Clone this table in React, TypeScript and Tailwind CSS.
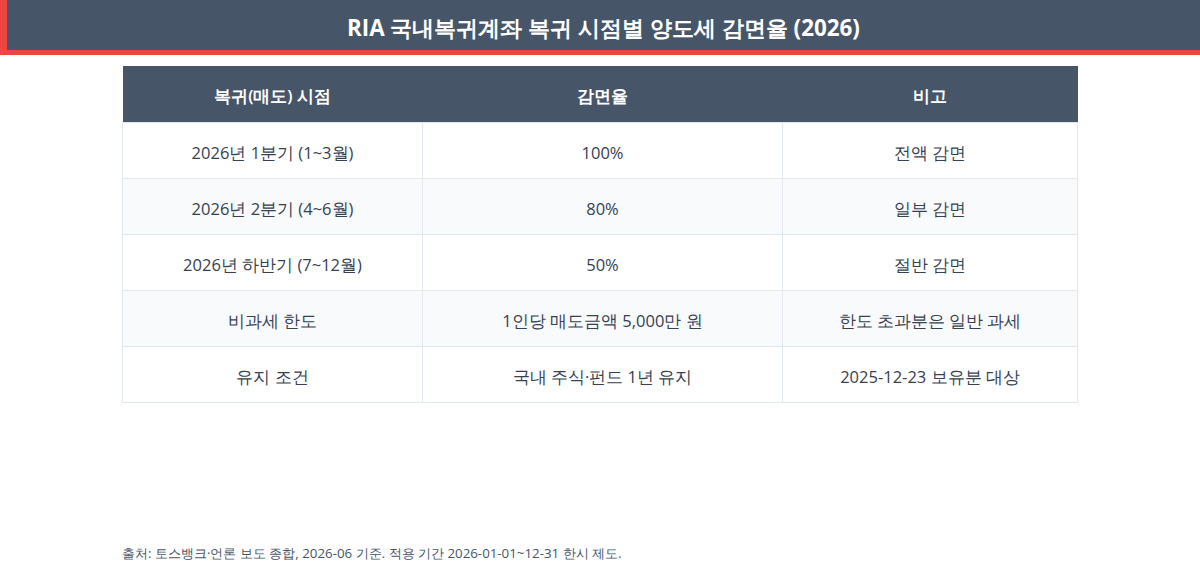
import React from "react";

const rows = [
  ["2026년 1분기 (1~3월)", "100%", "전액 감면"],
  ["2026년 2분기 (4~6월)", "80%", "일부 감면"],
  ["2026년 하반기 (7~12월)", "50%", "절반 감면"],
  ["비과세 한도", "1인당 매도금액 5,000만 원", "한도 초과분은 일반 과세"],
  ["유지 조건", "국내 주식·펀드 1년 유지", "2025-12-23 보유분 대상"],
];

export default function App() {
  return (
    <div className="flex h-[570px] w-[1200px] flex-col bg-white font-['Open_Sans',sans-serif]">
      <div className="flex h-[55px] items-center justify-center border-b-[5px] border-l-[7px] border-[#ef4444] bg-[#475569]">
        <h1 className="pt-[6px] text-[22.4px] font-bold text-white">
          RIA 국내복귀계좌 복귀 시점별 양도세 감면율 (2026)
        </h1>
      </div>
      <div className="mx-auto mt-[11px] w-[956px]">
        <table className="w-full border-collapse text-[16.5px]">
          <thead>
            <tr className="h-[56px] bg-[#475569] text-white">
              <th className="w-[300px] pt-[5px] font-semibold">복귀(매도) 시점</th>
              <th className="w-[360px] pt-[5px] font-semibold">감면율</th>
              <th className="pt-[5px] font-semibold">비고</th>
            </tr>
          </thead>
          <tbody>
            {rows.map((r, i) => (
              <tr
                key={i}
                className={`h-[56px] text-[#374151] ${i % 2 === 1 ? "bg-[#f8fafc]" : "bg-white"}`}
              >
                {r.map((c, j) => (
                  <td key={j} className="border border-[#e2e8f0] pt-[7px] text-center">
                    {c}
                  </td>
                ))}
              </tr>
            ))}
          </tbody>
        </table>
      </div>
      <div className="mx-auto mt-auto mb-[6px] w-[956px] text-[13.3px] text-[#475569]">
        출처: 토스뱅크·언론 보도 종합, 2026-06 기준. 적용 기간 2026-01-01~12-31 한시 제도.
      </div>
    </div>
  );
}
